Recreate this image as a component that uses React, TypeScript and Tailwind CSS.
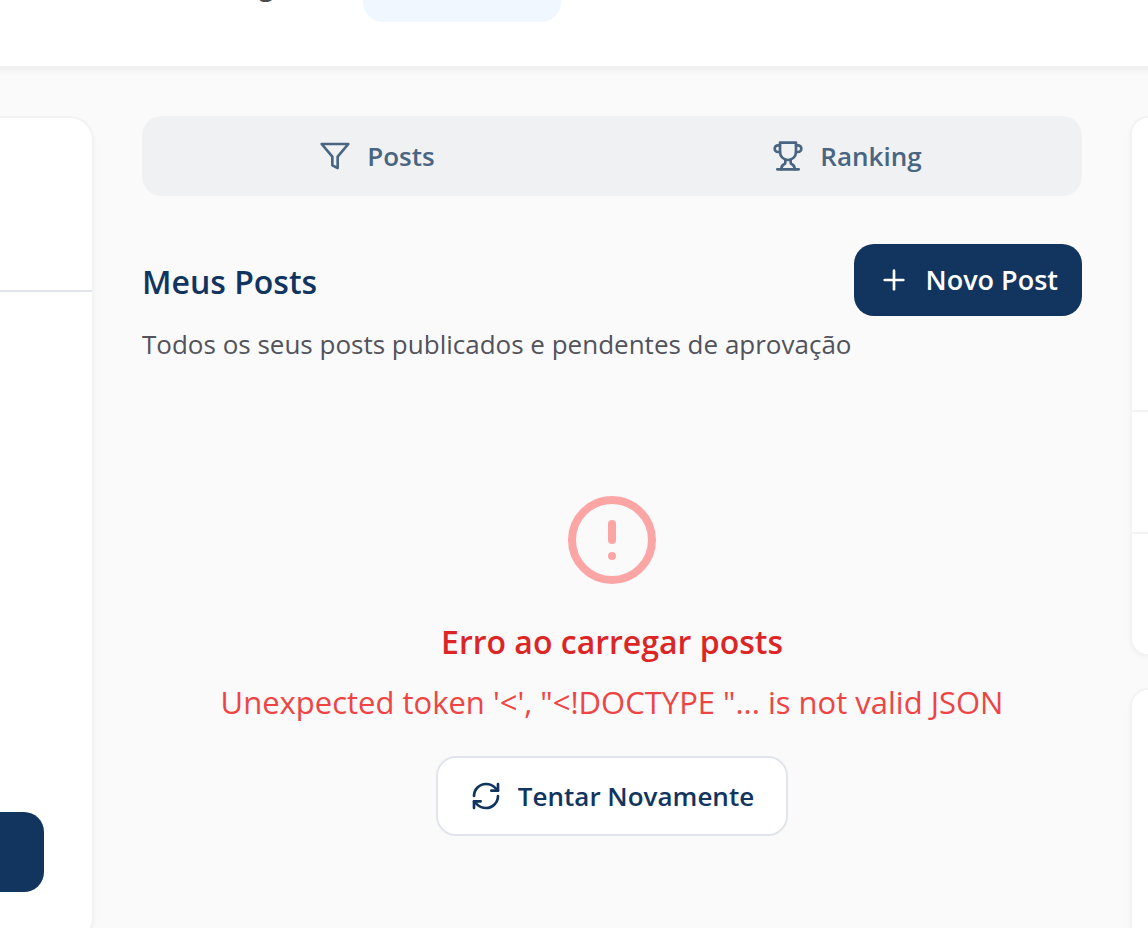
import type { ReactNode } from "react";

function Icon({ className, children }: { className: string; children: ReactNode }) {
  return (
    <svg
      className={className}
      viewBox="0 0 24 24"
      fill="none"
      stroke="currentColor"
      strokeWidth={2}
      strokeLinecap="round"
      strokeLinejoin="round"
      aria-hidden="true"
    >
      {children}
    </svg>
  );
}

function Header() {
  return (
    <header className="-mx-2 flex h-[68px] shrink-0 items-start border-b-2 border-[#f1f1f1] bg-white pl-[267px] shadow-[0_2px_6px_rgba(0,0,0,0.06)]">
      <div className="flex h-[22px] items-end gap-[90px] overflow-hidden">
        <a href="#" className="-mt-7 self-start text-[26px] leading-7 font-semibold text-[#4b4b4f]">
          g
        </a>
        <div className="h-20 w-[198px] rounded-[20px] bg-[#f0f7ff]" />
      </div>
    </header>
  );
}

function Tabs() {
  return (
    <nav className="grid h-20 grid-cols-2 rounded-[20px] bg-[#f0f1f3] text-[26px] leading-10 font-semibold text-[#486581]">
      <button type="button" className="flex items-center justify-center gap-4">
        <Icon className="size-8">
          <polygon points="22 3 2 3 10 12.46 10 19 14 21 14 12.46 22 3" />
        </Icon>
        Posts
      </button>
      <button type="button" className="flex items-center justify-center gap-4">
        <Icon className="size-8">
          <path d="M6 9H4.5a2.5 2.5 0 0 1 0-5H6" />
          <path d="M18 9h1.5a2.5 2.5 0 0 0 0-5H18" />
          <path d="M4 22h16" />
          <path d="M10 14.66V17c0 .55-.47.98-.97 1.21C7.85 18.75 7 20.24 7 22" />
          <path d="M14 14.66V17c0 .55.47.98.97 1.21C16.15 18.75 17 20.24 17 22" />
          <path d="M18 2H6v7a6 6 0 0 0 12 0V2Z" />
        </Icon>
        Ranking
      </button>
    </nav>
  );
}

function ErrorState() {
  return (
    <section className="flex flex-col items-center pt-32 text-center">
      <Icon className="size-24 text-[#fca5a5]">
        <circle cx="12" cy="12" r="10" />
        <line x1="12" x2="12" y1="8" y2="12" />
        <line x1="12" x2="12.01" y1="16" y2="16" />
      </Icon>
      <h3 className="mt-[30px] text-[32px] leading-[48px] font-semibold text-[#dc2626]">Erro ao carregar posts</h3>
      <p className="mt-[14px] text-[31px] leading-[44px] text-[#ef4444]">
        Unexpected token '&lt;', "&lt;!DOCTYPE "... is not valid JSON
      </p>
      <button
        type="button"
        className="mt-8 flex h-20 items-center gap-4 rounded-[20px] border-2 border-[#e1e5eb] bg-white px-8 text-[26px] leading-10 font-semibold text-[#11355f]"
      >
        <Icon className="size-8">
          <path d="M3 12a9 9 0 0 1 9-9 9.75 9.75 0 0 1 6.74 2.74L21 8" />
          <path d="M21 3v5h-5" />
          <path d="M21 12a9 9 0 0 1-9 9 9.75 9.75 0 0 1-6.74-2.74L3 16" />
          <path d="M8 16H3v5" />
        </Icon>
        Tentar Novamente
      </button>
    </section>
  );
}

export default function App() {
  return (
    <div className="flex h-screen flex-col overflow-hidden bg-[#fafafa] font-['Open_Sans',sans-serif]">
      <Header />
      <div className="grid grid-cols-[94px_minmax(0,1fr)_18px] items-start gap-12 pt-12">
        <aside className="rounded-r-[24px] border-y-2 border-r-2 border-[#f3f3f4] bg-white pb-12 shadow-[0_2px_4px_rgba(0,0,0,0.04)]">
          <div className="h-[174px] border-b-2 border-[#e1e5eb]" />
          <div className="h-[520px]" />
          <button type="button" aria-label="Perfil" className="block h-20 w-11 rounded-r-[20px] bg-[#11355f]" />
        </aside>

        <main>
          <Tabs />
          <div className="mt-12 flex h-[72px] items-center justify-between">
            <h2 className="pt-1 text-[32px] leading-[48px] font-semibold text-[#11355f]">Meus Posts</h2>
            <button
              type="button"
              className="flex h-[72px] items-center gap-4 rounded-[20px] bg-[#11355f] px-6 text-[27px] leading-10 font-semibold text-white"
            >
              <Icon className="size-8">
                <path d="M5 12h14" />
                <path d="M12 5v14" />
              </Icon>
              Novo Post
            </button>
          </div>
          <p className="mt-2 text-[26px] leading-10 text-[#52525b]">
            Todos os seus posts publicados e pendentes de aprovação
          </p>
          <ErrorState />
        </main>

        <aside className="flex flex-col gap-8">
          <div className="rounded-l-[24px] border-y-2 border-l-2 border-[#f3f3f4] bg-white shadow-[0_2px_4px_rgba(0,0,0,0.04)]">
            <div className="h-[294px] border-b-2 border-[#f3f3f4]" />
            <div className="h-[122px] border-b-2 border-[#f3f3f4]" />
            <div className="h-[120px]" />
          </div>
          <div className="h-[400px] rounded-l-[24px] border-y-2 border-l-2 border-[#f3f3f4] bg-white shadow-[0_2px_4px_rgba(0,0,0,0.04)]" />
        </aside>
      </div>
    </div>
  );
}
